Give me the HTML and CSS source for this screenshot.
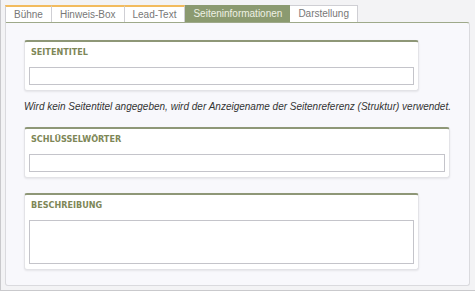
FILE: index.html
```html
<!DOCTYPE html>
<html lang="de">
<head>
    <meta charset="UTF-8">
    <title>Seiteninformationen</title>
    <link rel="stylesheet" href="styles.css">
</head>
<body>
    <div class="frame">
        <ul class="tabs">
            <li class="tab filled">Bühne</li>
            <li class="tab filled">Hinweis-Box</li>
            <li class="tab filled">Lead-Text</li>
            <li class="tab active">Seiteninformationen</li>
            <li class="tab">Darstellung</li>
        </ul>
        <div class="panel">
            <div class="card card-short">
                <div class="label">Seitentitel</div>
                <input class="field" type="text">
            </div>
            <p class="note">Wird kein Seitentitel angegeben, wird der Anzeigename der Seitenreferenz (Struktur) verwendet.</p>
            <div class="card card-wide">
                <div class="label">Schlüsselwörter</div>
                <input class="field" type="text">
            </div>
            <div class="card card-short card-last">
                <div class="label">Beschreibung</div>
                <textarea class="field area"></textarea>
            </div>
        </div>
    </div>
</body>
</html>
```

FILE: styles.css
```css
html, body {
    margin: 0;
    padding: 0;
}
body {
    background-color: #f3f3f5;
    font-family: "Liberation Sans", Arial, sans-serif;
}
.frame {
    box-sizing: border-box;
    height: 291px;
    border-left: 1px solid #c9c9cc;
    border-bottom: 1px solid #c9c9cc;
    padding: 5px 5px 0 4px;
}
.tabs {
    display: flex;
    margin: 0;
    padding: 0;
    list-style: none;
    height: 17px;
}
.tab {
    box-sizing: border-box;
    height: 17px;
    padding: 0 8px;
    font-size: 10px;
    line-height: 15px;
    color: #777;
    background-color: #fff;
    border: 1px solid #cfcfd4;
    border-bottom: none;
    border-left: none;
}
.tab:first-child {
    border-left: 1px solid #cfcfd4;
}
.tab.filled {
    border-top: 2px solid #f2bb5e;
}
.tab.active {
    background-color: #8b9a70;
    color: #eef1e4;
    border: none;
    padding: 0 8px;
    line-height: 17px;
}
.panel {
    box-sizing: border-box;
    height: 264px;
    background-color: #f8f8fc;
    border: 1px solid #dadade;
    border-top: 1px solid #9ea98a;
    border-radius: 0 3px 3px 3px;
    padding: 17px 19px 0 18px;
}
.card {
    box-sizing: border-box;
    background-color: #fff;
    border: 1px solid #e3e3e7;
    border-top: 2px solid #8e9777;
    border-radius: 3px;
    box-shadow: 0 1px 2px rgba(0, 0, 0, 0.08);
    padding: 5px 4px 5px 4px;
}
.card-short {
    width: 395px;
}
.card-wide {
    width: 426px;
    margin-top: 14px;
}
.card-last {
    margin-top: 15px;
}
.label {
    font-family: "DejaVu Sans Condensed", "DejaVu Sans", sans-serif;
    font-stretch: condensed;
    font-weight: bold;
    font-size: 9px;
    line-height: 11px;
    color: #7e8757;
    text-transform: uppercase;
    padding-left: 2px;
    margin-bottom: 9px;
}
.field {
    display: block;
    box-sizing: border-box;
    width: 100%;
    height: 18px;
    margin: 0;
    border: 1px solid #c4c4ca;
    background-color: #fff;
    padding: 0 3px;
    font-family: "Liberation Sans", Arial, sans-serif;
    font-size: 10px;
}
.area {
    height: 44px;
    resize: none;
}
.note {
    margin: 9px 0 0 0;
    font-size: 10px;
    line-height: 13px;
    font-style: italic;
    color: #333;
    white-space: nowrap;
}
```
